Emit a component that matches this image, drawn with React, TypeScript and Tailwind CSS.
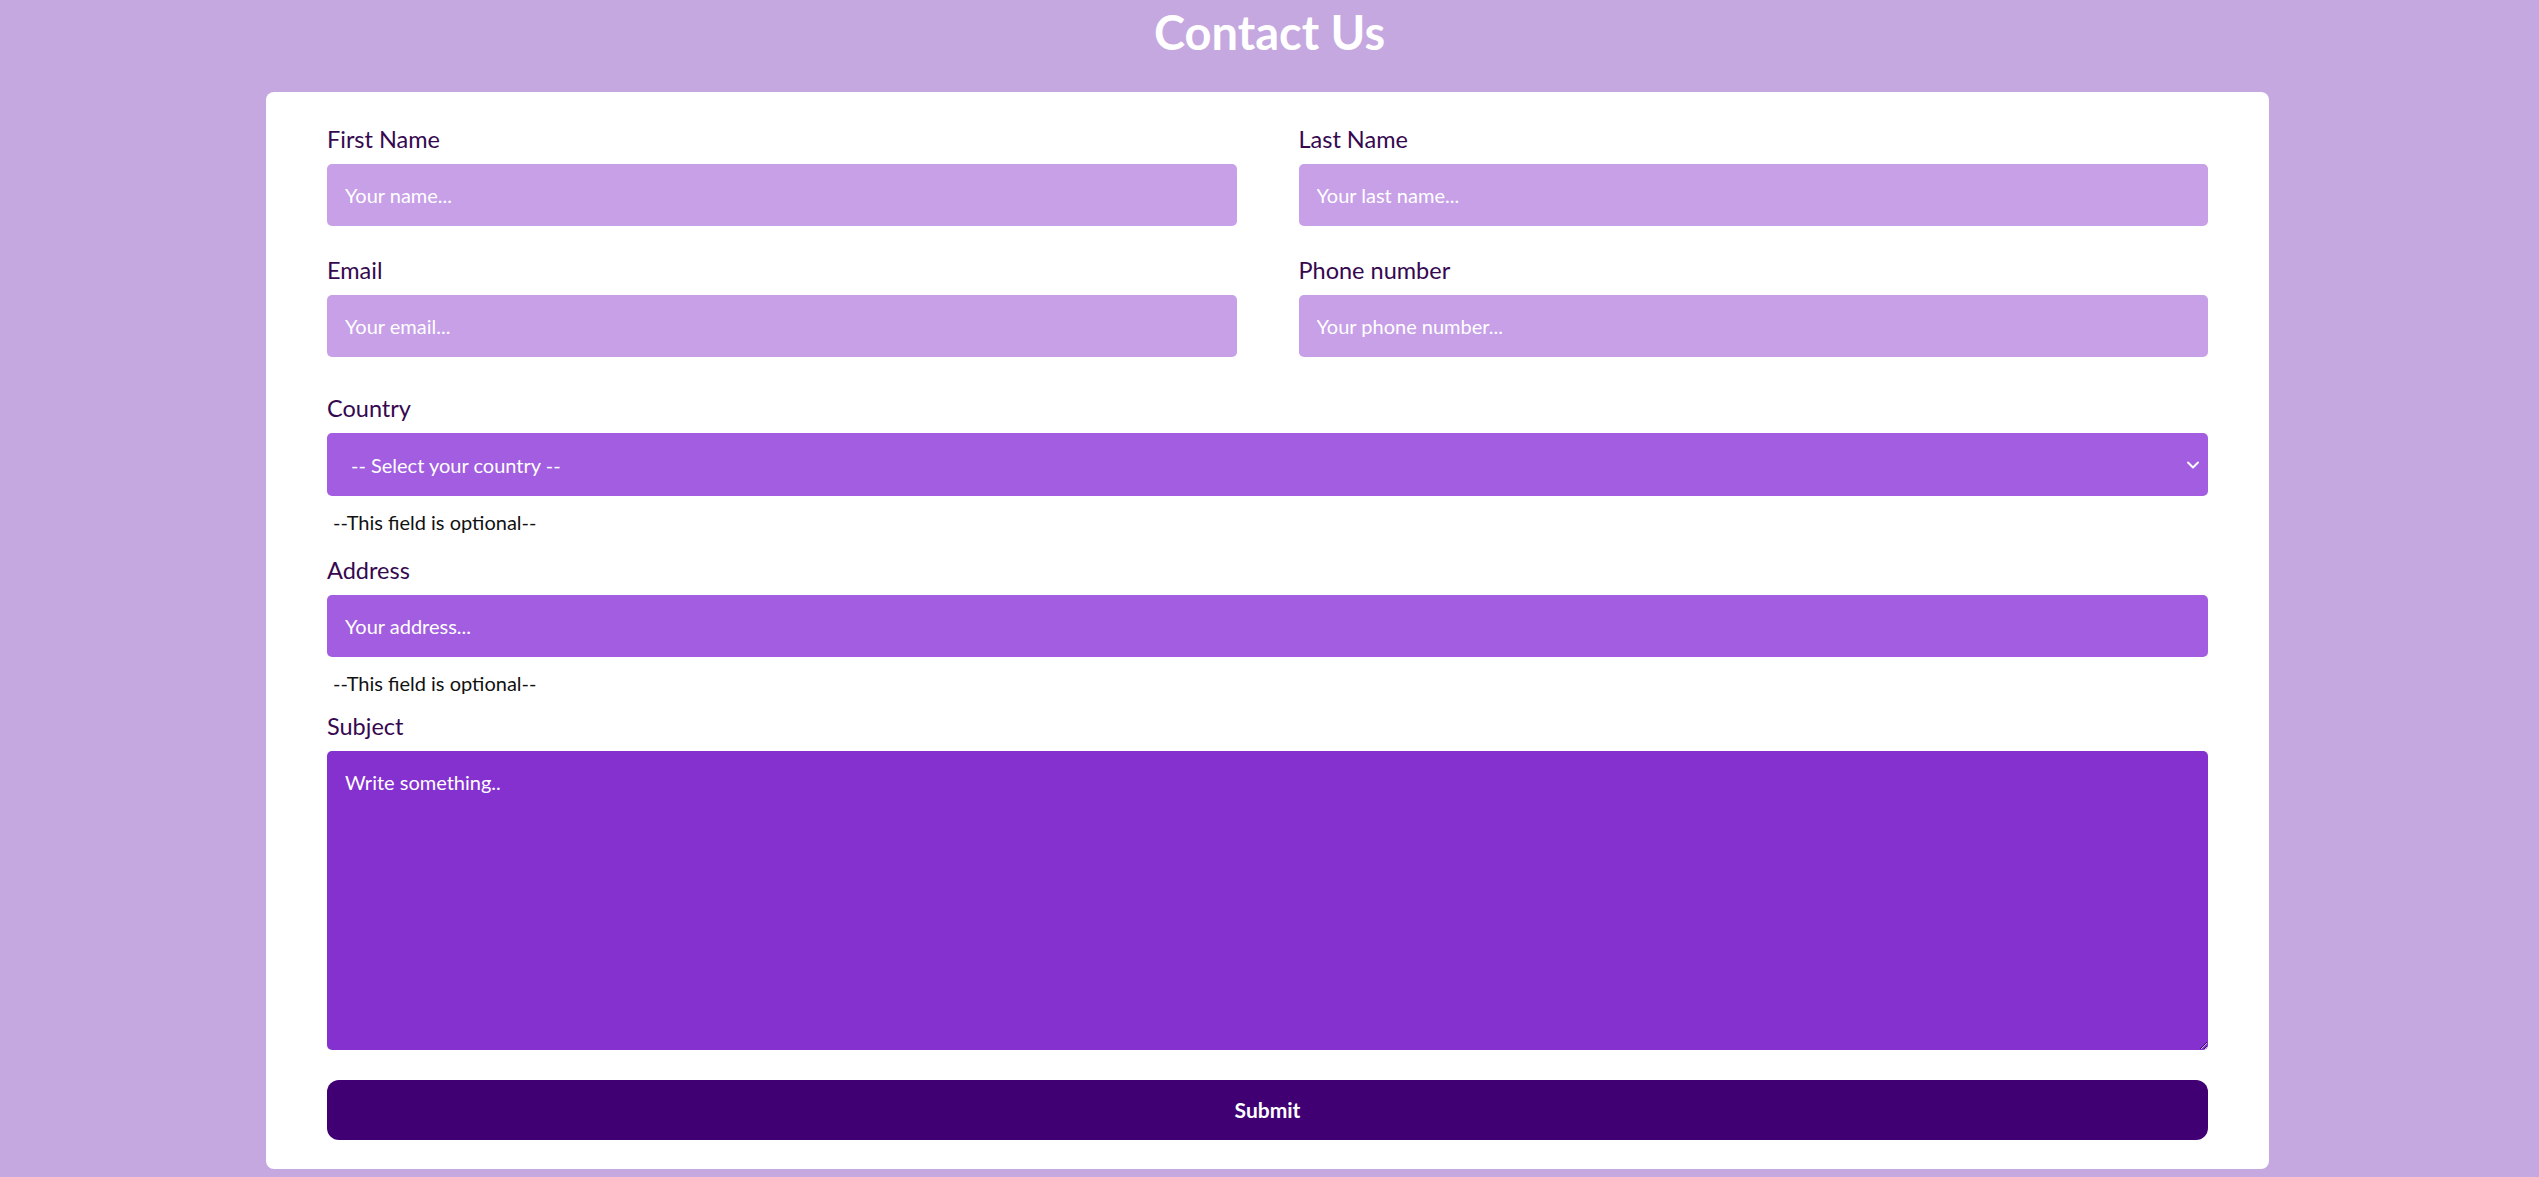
import React from "react";

const labelCls = "block text-[23.5px] leading-[36px] text-[#35084f] mb-[7px]";
const lightInput =
  "block w-full h-[62px] rounded-[5px] bg-[#c7a0e8] px-[18px] text-[20px] text-white placeholder:text-white outline-none border-0";

function Field({ label, placeholder, id }: { label: string; placeholder: string; id: string }) {
  return (
    <div>
      <label htmlFor={id} className={labelCls}>
        {label}
      </label>
      <input id={id} type="text" placeholder={placeholder} className={lightInput} />
    </div>
  );
}

export default function App() {
  return (
    <div className="min-h-screen bg-[#c5a8e0] font-['Lato','Open_Sans',sans-serif] pb-[8px]">
      <h1 className="text-center text-white font-bold text-[47px] leading-[64px]">Contact Us</h1>
      <div className="ml-[266px] mt-[28px] w-[2003px] rounded-[8px] bg-white px-[61px] pt-[29px] pb-[29px]">
        <div className="grid grid-cols-2 gap-x-[62px] gap-y-[26px]">
          <Field id="fn" label="First Name" placeholder="Your name..." />
          <Field id="ln" label="Last Name" placeholder="Your last name..." />
          <Field id="em" label="Email" placeholder="Your email..." />
          <Field id="ph" label="Phone number" placeholder="Your phone number..." />
        </div>

        <div className="mt-[33px]">
          <label htmlFor="country" className={labelCls}>
            Country
          </label>
          <div className="relative">
            <select
              id="country"
              className="block w-full h-[63px] appearance-none rounded-[5px] bg-[#a25de0] pl-[24px] pr-[40px] text-[20px] text-white outline-none border-0"
              defaultValue=""
            >
              <option value="">-- Select your country --</option>
            </select>
            <svg
              className="pointer-events-none absolute right-[8px] top-1/2 -translate-y-1/2"
              width="14"
              height="9"
              viewBox="0 0 14 9"
              fill="none"
            >
              <path d="M2 2l5 5 5-5" stroke="white" strokeWidth="2" strokeLinecap="round" strokeLinejoin="round" />
            </svg>
          </div>
          <p className="mt-[12px] pl-[6px] text-[20px] leading-[28px] text-[#111]">--This field is optional--</p>
        </div>

        <div className="mt-[16px]">
          <label htmlFor="addr" className={labelCls}>
            Address
          </label>
          <input
            id="addr"
            type="text"
            placeholder="Your address..."
            className="block w-full h-[62px] rounded-[5px] bg-[#a25de0] px-[18px] text-[20px] text-white placeholder:text-white outline-none border-0"
          />
          <p className="mt-[12px] pl-[6px] text-[20px] leading-[28px] text-[#111]">--This field is optional--</p>
        </div>

        <div className="mt-[11px]">
          <label htmlFor="subj" className={labelCls}>
            Subject
          </label>
          <textarea
            id="subj"
            placeholder="Write something.."
            className="block w-full h-[299px] rounded-[5px] bg-[#8531d0] px-[18px] pt-[16px] text-[20px] leading-[30px] text-white placeholder:text-white outline-none border-0"
          />
        </div>

        <button
          type="button"
          className="mt-[30px] block w-full h-[60px] rounded-[12px] bg-[#400073] text-[21px] font-bold text-white"
        >
          Submit
        </button>
      </div>
    </div>
  );
}
